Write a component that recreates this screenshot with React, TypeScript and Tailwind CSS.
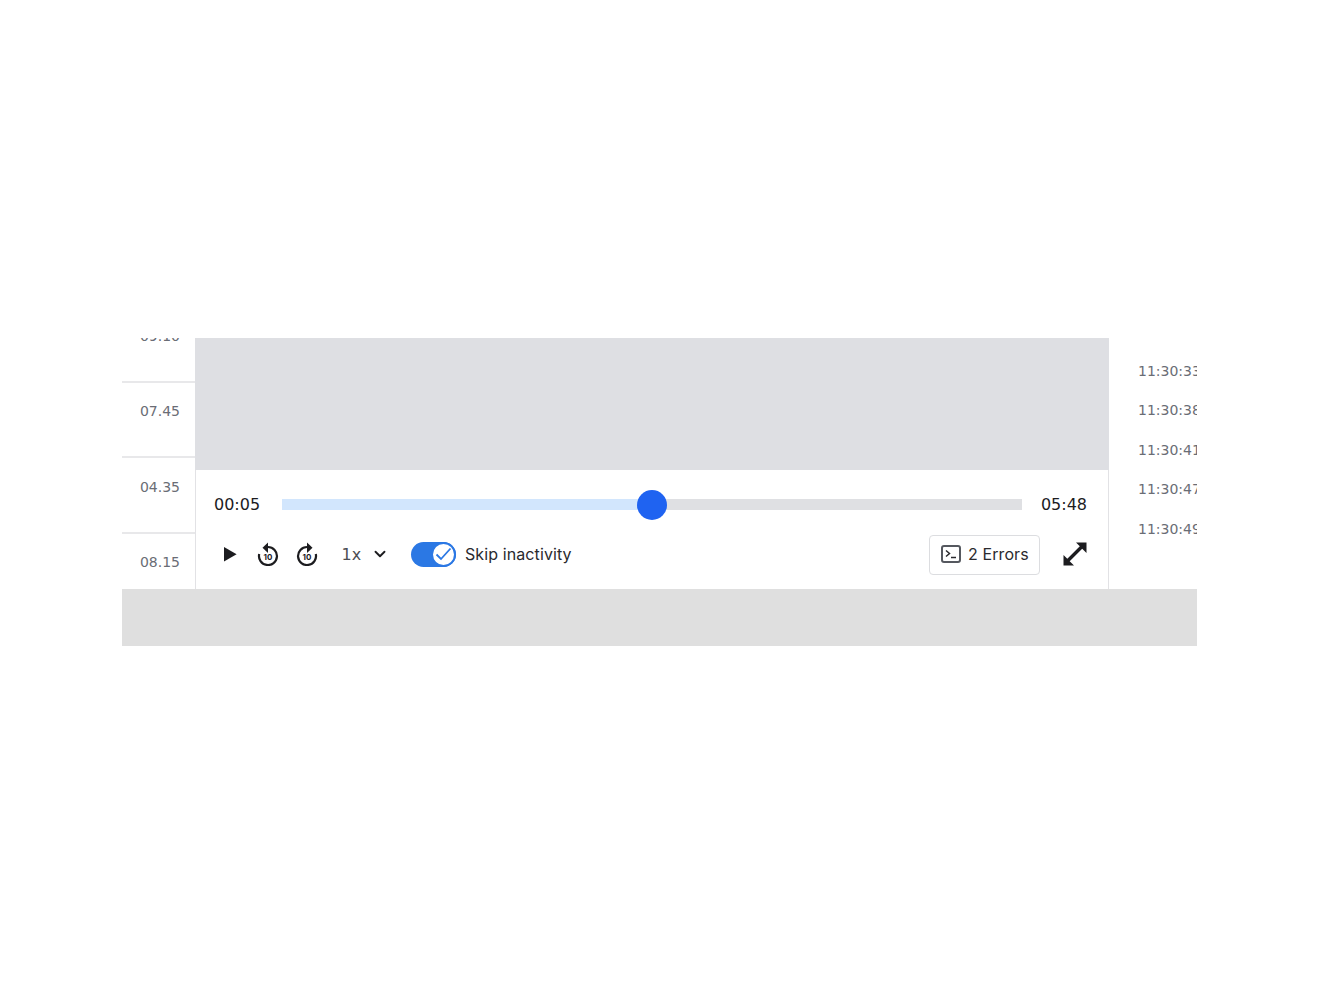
import { ChevronDown } from "lucide-react";

const WORDS = "font-['Inter','Noto_Sans',sans-serif]";
const NUMS = "font-['DejaVu_Sans','Noto_Sans',sans-serif]";

const rows = ["09.10", "07.45", "04.35", "08.15"];
const stamps = ["11:30:33", "11:30:38", "11:30:41", "11:30:47", "11:30:49"];

function SkipIcon({ forward }: { forward?: boolean }) {
  return (
    <span className="relative flex h-6 w-6 items-center justify-center">
      <svg width="24" height="24" viewBox="0 0 24 24" fill="none" className={forward ? "-scale-x-100" : ""}>
        <path d="M12 5A9 9 0 1 1 3.200 12" stroke="#1c1c1f" strokeWidth="2.2" />
        <path d="M12 .6V11L6.500 5.800z" fill="#1c1c1f" />
      </svg>
      <span className={`absolute left-0 right-0 top-[10px] text-center text-[8px] leading-[10px] font-bold text-[#1c1c1f] ${WORDS}`}>10</span>
    </span>
  );
}

function PlayIcon() {
  return (
    <svg width="14" height="16" viewBox="0 0 14 16">
      <path d="M1 1v14.500l12.600-7.200z" fill="#1c1c1f" />
    </svg>
  );
}

function TerminalIcon() {
  return (
    <svg width="20" height="18" viewBox="0 0 20 18" fill="none">
      <rect x="1" y="1" width="18" height="16" rx="2" stroke="#55585f" strokeWidth="2" />
      <path d="M5 5.500 8.500 8.500 5 11.500" stroke="#2a2a2e" strokeWidth="1.500" />
      <path d="M10 12.500h5" stroke="#2a2a2e" strokeWidth="1.500" />
    </svg>
  );
}

function ExpandIcon() {
  return (
    <svg width="24" height="24" viewBox="0 0 24 24" fill="#1c1c1f">
      <path d="M13 .5H23.500V11L19.200 6.700 6.700 19.200 11 23.500H.5V13L4.300 16.800 16.800 4.300z" />
    </svg>
  );
}

export default function App() {
  return (
    <div className={`flex h-[982px] w-[1320px] flex-col bg-white pl-[122px] pt-[338px] ${WORDS}`}>
      <div className="flex h-[308px] w-[1075px] flex-col overflow-hidden">
        <div className="flex h-[251px] shrink-0">
          {/* Left time column */}
          <div className="-mt-[31px] w-[73px] shrink-0">
            {rows.map((r) => (
              <div
                key={r}
                className={`flex h-[75.5px] items-start justify-end border-b-2 border-[#e8e8ea] pr-[15px] pt-[18.500px] text-[14px] leading-5 text-[#6a6d75] last:border-b-0 ${NUMS}`}
              >
                {r}
              </div>
            ))}
          </div>

          {/* Player */}
          <div className="flex w-[914px] shrink-0 flex-col border-x border-[#e2e2e5]">
            <div className="-mx-px h-[132px] shrink-0 bg-[#dedfe3]" />
            <div className="flex flex-1 flex-col pl-[18px] pr-[21px]">
              <div className="flex h-[65px] items-center pt-[4px]">
                <span className={`w-[68px] shrink-0 text-[16px] leading-6 text-[#1c1c1f] ${NUMS}`}>00:05</span>
                <div className="relative flex h-[11px] w-[740px] shrink-0 bg-[#dfe0e3]">
                  <div className="h-full w-[370px] bg-[#d2e6fd]" />
                  <div className="absolute left-[355px] top-[-9px] h-[30px] w-[30px] rounded-full bg-[#1f63f1]" />
                </div>
                <span className={`ml-auto text-[16px] leading-6 text-[#1c1c1f] ${NUMS}`}>05:48</span>
              </div>
              <div className="flex items-center">
                <div className="mb-[2px] flex w-[23px] justify-end">
                  <PlayIcon />
                </div>
                <div className="mb-[2px] ml-[19px]">
                  <SkipIcon />
                </div>
                <div className="mb-[2px] ml-[15px]">
                  <SkipIcon forward />
                </div>
                <span className={`ml-[22.500px] w-[29.500px] text-[16px] text-[#4c4e54] ${NUMS}`}>1x</span>
                <ChevronDown size={18} strokeWidth={2.5} className="mb-[2px] text-[#1c1c1f]" />
                <div className="relative mb-[2px] ml-[22px] h-[25px] w-[45px] rounded-full bg-[#2b78e4]">
                  <div className="absolute right-0 top-0 flex h-[25px] w-[25px] items-center justify-center rounded-full border-2 border-[#2b78e4] bg-white">
                    <svg width="17" height="14" viewBox="0 0 17 14" fill="none">
                      <path d="M1.500 7.500 6 12 15.500 1.500" stroke="#2b78e4" strokeWidth="1.800" />
                    </svg>
                  </div>
                </div>
                <span className="mb-[2px] ml-[9px] text-[16px] tracking-[0.1px] text-[#2a2a2e]">Skip inactivity</span>
                <div className="ml-auto flex h-[40px] w-[111px] items-center gap-[7px] rounded-[4px] border border-[#dcdde0] pb-[2px] pl-[11px]">
                  <TerminalIcon />
                  <span className="text-[16px] tracking-[0.1px] text-[#2a2a2e]">2 Errors</span>
                </div>
                <div className="mb-[2px] ml-[23px]">
                  <ExpandIcon />
                </div>
              </div>
            </div>
          </div>

          {/* Right timestamps */}
          <div className="flex w-[88px] shrink-0 flex-col gap-[19.500px] overflow-hidden pl-[29px] pt-[22.500px]">
            {stamps.map((s) => (
              <div key={s} className={`h-5 whitespace-nowrap text-[14px] leading-5 text-[#6a6d75] ${NUMS}`}>
                {s}
              </div>
            ))}
          </div>
        </div>
        <div className="h-[57px] shrink-0 bg-[#dfdfdf]" />
      </div>
    </div>
  );
}
